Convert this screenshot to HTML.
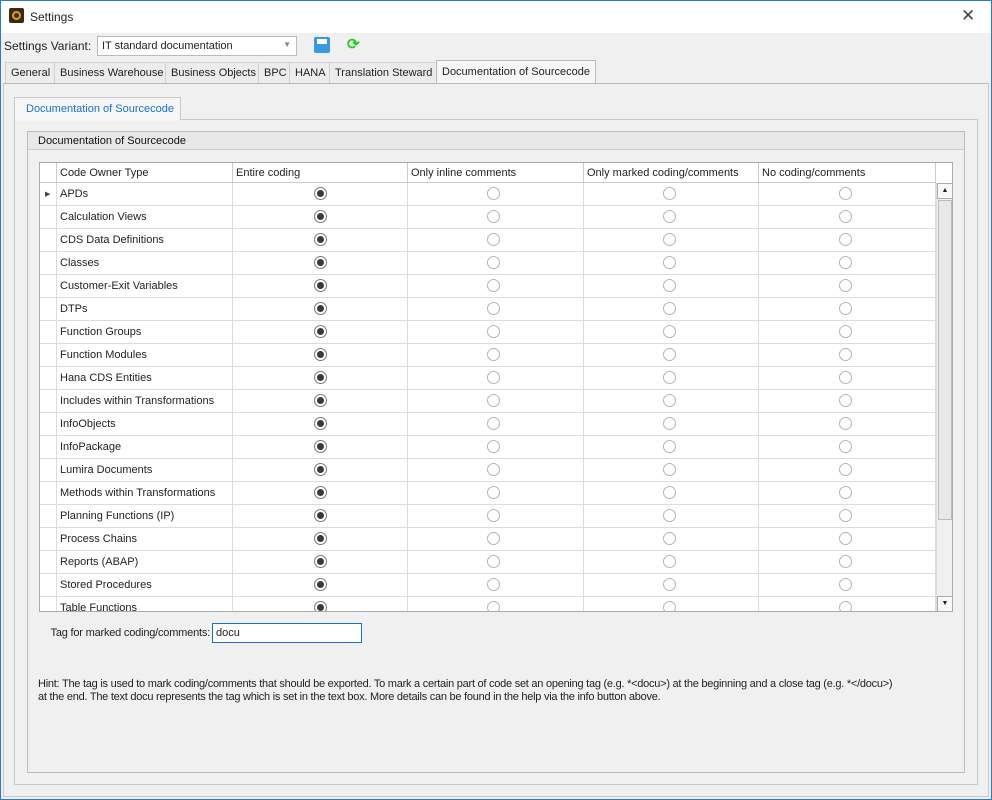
<!DOCTYPE html><html><head><style>
*{box-sizing:border-box;margin:0;padding:0}
body{width:992px;height:800px;background:#f0f0f0;font-family:"Liberation Sans",sans-serif;font-size:11px;color:#222;position:relative;overflow:hidden}
.a{position:absolute}
.win{left:0;top:0;width:992px;height:800px;border:1px solid #2b79d0}
.tab{position:absolute;top:62px;height:21px;border:1px solid #d0d0d0;border-bottom:none;background:#ececec;padding:4px 5px 0;white-space:nowrap}
.grid{left:39px;top:162px;width:914px;height:450px;border:1px solid #aaa;background:#fff;overflow:hidden}
.r{position:absolute;left:0;height:23px;width:896px;border-bottom:1px solid #dcdcdc}
.c{position:absolute;top:0;height:23px;border-right:1px solid #dcdcdc}
.rad{position:absolute;width:13px;height:13px;border-radius:50%;border:1px solid #b4b4b4;background:#fff;top:4px}
.on{border-color:#777}
.on::after{content:"";position:absolute;left:2px;top:2px;width:7px;height:7px;border-radius:50%;background:#3a3a3a}
</style></head><body>
<div class="a win"></div>
<div class="a" style="left:1px;top:1px;width:990px;height:32px;background:#fff"></div>
<div class="a" style="left:9px;top:8px;width:15px;height:15px;background:#3a2a10;border-radius:2px"><div style="margin:3px;width:9px;height:9px;border-radius:50%;border:2px solid #e0a020"></div></div>
<div class="a" style="left:30px;top:10px;font-size:12px">Settings</div>
<div class="a" style="left:961px;top:6px;font-size:17px;color:#444">✕</div>
<div class="a" style="left:4px;top:39px;font-size:12px">Settings Variant:</div>
<div class="a" style="left:97px;top:36px;width:200px;height:20px;border:1px solid #bbb;background:#fff;padding:3px 4px;font-size:11px">IT standard documentation<span style="position:absolute;right:5px;top:3px;color:#888;font-size:8px">▼</span></div>
<div class="a" style="left:314px;top:37px;width:16px;height:16px;background:#3a9ae0;border-radius:2px"><div style="margin:2px 3px;width:10px;height:5px;background:#fff"></div></div>
<div class="a" style="left:347px;top:35px;color:#2c2;font-size:15px;font-weight:bold">⟳</div>
<div class="tab" style="left:5px">General</div>
<div class="tab" style="left:54px">Business Warehouse</div>
<div class="tab" style="left:165px">Business Objects</div>
<div class="tab" style="left:258px">BPC</div>
<div class="tab" style="left:289px">HANA</div>
<div class="tab" style="left:329px">Translation Steward</div>
<div class="tab" style="left:436px;top:60px;height:24px;background:#f6f6f6;border-color:#bbb;padding-top:5px">Documentation of Sourcecode</div>
<div class="a" style="left:3px;top:83px;width:986px;height:714px;border:1px solid #c8c8c8;border-top:1px solid #bbb"></div>
<div class="a" style="left:14px;top:97px;width:167px;height:23px;border:1px solid #c8c8c8;border-bottom:none;background:#f6f6f6;color:#1a6fc8;padding:5px 0 0 11px">Documentation of Sourcecode</div>
<div class="a" style="left:14px;top:119px;width:964px;height:666px;border:1px solid #c8c8c8;border-top:1px solid #c8c8c8"></div>
<div class="a" style="left:15px;top:119px;width:165px;height:2px;background:#f6f6f6"></div>
<div class="a" style="left:27px;top:131px;width:938px;height:642px;border:1px solid #bbb"></div>
<div class="a" style="left:28px;top:132px;width:936px;height:18px;background:#e8e8e8;border-bottom:1px solid #ccc;padding:3px 0 0 10px;color:#111">Documentation of Sourcecode</div>
<div class="a grid">
<div class="r" style="top:0;height:20px;background:#fff;border-bottom:1px solid #ccc">
<div class="c" style="left:0;width:17px;height:20px;border-color:#ccc"></div>
<div class="c" style="left:17px;width:176px;height:20px;padding:4px 3px;border-color:#ccc">Code Owner Type</div>
<div class="c" style="left:193px;width:175px;height:20px;padding:4px 3px;border-color:#ccc">Entire coding</div>
<div class="c" style="left:368px;width:176px;height:20px;padding:4px 3px;border-color:#ccc">Only inline comments</div>
<div class="c" style="left:544px;width:175px;height:20px;padding:4px 3px;border-color:#ccc">Only marked coding/comments</div>
<div class="c" style="left:719px;width:177px;height:20px;padding:4px 3px;border-color:#ccc">No coding/comments</div>
</div>
<div id="rows"></div>
<div class="a" style="left:896px;top:20px;width:17px;height:429px;background:#f0f0f0;border-left:1px solid #ddd">
<div style="height:16px;border:1px solid #aaa;background:#f8f8f8;font-size:7px;text-align:center;line-height:14px">▲</div>
<div style="margin:1px 1px;height:320px;border:1px solid #bbb;background:#e8e8e8"></div>
<div style="position:absolute;bottom:0;width:16px;height:16px;border:1px solid #aaa;background:#f8f8f8;font-size:7px;text-align:center;line-height:14px">▼</div>
</div>
</div>
<div class="a" style="left:40px;top:627px;width:170px;text-align:right;letter-spacing:-0.2px">Tag for marked coding/comments:</div>
<div class="a" style="left:212px;top:623px;width:150px;height:20px;border:1px solid #1a6fc8;background:#fff;padding:3px 3px">docu</div>
<div class="a" style="left:38px;top:678px;width:920px;line-height:13px;letter-spacing:-0.25px">Hint: The tag is used to mark coding/comments that should be exported. To mark a certain part of code set an opening tag (e.g. *&lt;docu&gt;) at the beginning and a close tag (e.g. *&lt;/docu&gt;)<br>at the end. The text docu represents the tag which is set in the text box. More details can be found in the help via the info button above.</div>
<script>
var n=["APDs","Calculation Views","CDS Data Definitions","Classes","Customer-Exit Variables","DTPs","Function Groups","Function Modules","Hana CDS Entities","Includes within Transformations","InfoObjects","InfoPackage","Lumira Documents","Methods within Transformations","Planning Functions (IP)","Process Chains","Reports (ABAP)","Stored Procedures","Table Functions"];
var h="";n.forEach(function(t,i){var y=20+i*23;h+='<div class="r" style="top:'+y+'px"><div class="c" style="left:0;width:17px;font-size:7px;padding:7px 5px;color:#444">'+(i==0?'▶':'')+'</div><div class="c" style="left:17px;width:176px;padding:5px 3px">'+t+'</div><div class="c" style="left:193px;width:175px"><div class="rad on" style="left:81px"></div></div><div class="c" style="left:368px;width:176px"><div class="rad" style="left:79px"></div></div><div class="c" style="left:544px;width:175px"><div class="rad" style="left:79px"></div></div><div class="c" style="left:719px;width:177px"><div class="rad" style="left:80px"></div></div></div>'});
document.getElementById("rows").outerHTML=h;
</script>
</body></html>
